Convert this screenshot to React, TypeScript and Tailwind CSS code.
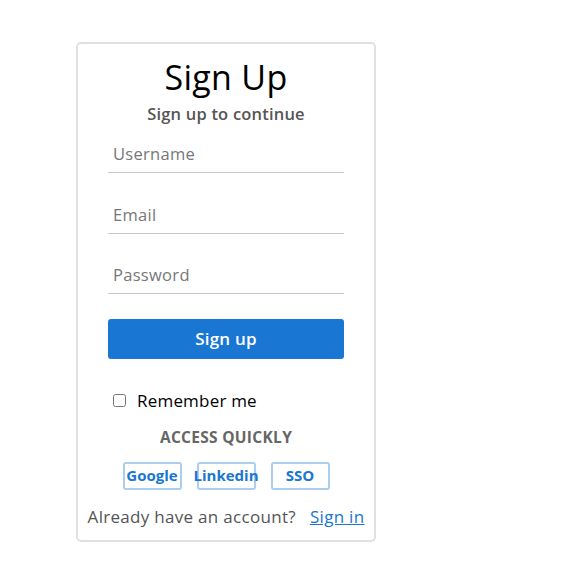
import React from "react";

export default function App() {
  const font = { fontFamily: '"Open Sans", "Liberation Sans", sans-serif' };
  return (
    <div className="min-h-[576px] bg-white pl-[76px] pt-[42px]" style={font}>
      <div className="w-[300px] h-[500px] border-2 border-[#e0e0e0] rounded-[5px] px-[30px] flex flex-col items-center">
        <h1 className="text-[34px] leading-[40px] mt-[13px] text-black tracking-[0.3px]">Sign Up</h1>
        <p className="text-[16.5px] font-semibold text-[#555] leading-[20px] mt-[7px] tracking-[0.2px]">Sign up to continue</p>
        <div className="w-full flex flex-col">
          {["Username", "Email", "Password"].map((p, i) => (
            <input
              key={p}
              placeholder={p}
              className={`w-full h-[37px] border-b border-[#c8c8c8] px-[5px] pb-[2px] text-[16.5px] tracking-[0.3px] text-[#333] placeholder:text-[#777] outline-none ${i === 0 ? "mt-[12px]" : i === 1 ? "mt-[24px]" : "mt-[23px]"}`}
            />
          ))}
          <button className="mt-[25px] w-full h-[40px] rounded-[3px] bg-[#1976d2] text-white font-semibold text-[17px] tracking-[0.2px]">
            Sign up
          </button>
        </div>
        <label className="self-start flex items-center gap-[11px] mt-[29px] ml-[5px] text-[17px] tracking-[0.2px] text-black">
          <input type="checkbox" className="w-[13px] h-[13px]" />
          Remember me
        </label>
        <div className="mt-[12px] text-[15.5px] font-bold text-[#666] tracking-[0.3px]">ACCESS QUICKLY</div>
        <div className="flex gap-[15px] mt-[13px]">
          {["Google", "Linkedin", "SSO"].map((s) => (
            <button
              key={s}
              className="w-[59px] h-[28px] border-2 border-[#aacdf0] rounded-[3px] text-[#1976d2] font-bold text-[15px] leading-none whitespace-nowrap flex items-center justify-center"
            >
              {s}
            </button>
          ))}
        </div>
        <div className="mt-[14px] text-[17px] tracking-[0.3px] text-[#555] whitespace-nowrap">
          Already have an account?
          <a href="#" className="ml-[14px] text-[#1976d2] underline">Sign in</a>
        </div>
      </div>
    </div>
  );
}
